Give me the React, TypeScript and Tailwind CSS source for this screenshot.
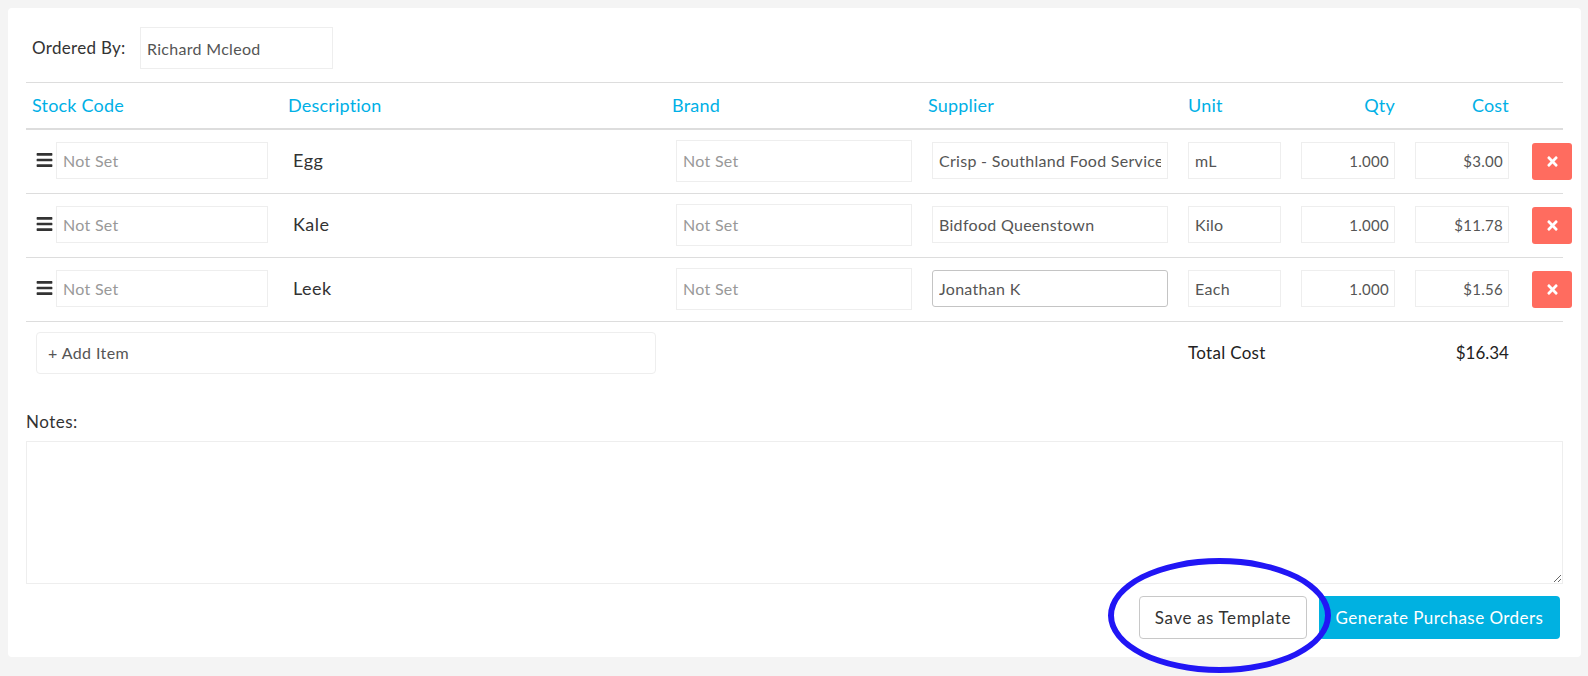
import { FaBars, FaTimes } from "react-icons/fa";

const ROWS = [
  { name: "Egg", supplier: "Crisp - Southland Food Services", unit: "mL", qty: "1.000", cost: "$3.00" },
  { name: "Kale", supplier: "Bidfood Queenstown", unit: "Kilo", qty: "1.000", cost: "$11.78" },
  { name: "Leek", supplier: "Jonathan K", unit: "Each", qty: "1.000", cost: "$1.56", focused: true },
];

const COLS = "grid grid-cols-[256px_384px_256px_260px_106px_114px_114px_46px]";
const FIELD = "border bg-white text-[#555555] outline-none placeholder:text-[#999999]";
const TEXT_FIELD = `${FIELD} h-[37px] px-[6px] text-[16px] tracking-[0.3px]`;
const NUM_FIELD = `${FIELD} border-[#eeeeee] w-[94px] h-[37px] pl-[6px] pr-[5px] text-right text-[15px] tracking-[0.3px]`;

function ItemRow({ row }: { row: (typeof ROWS)[number] }) {
  return (
    <div className={`${COLS} h-[64px] pb-[2px] items-center border-b border-[#dddddd]`}>
      <div className="flex items-center pl-[10px]">
        <FaBars size={18} className="text-[#333333] mr-[3px] w-[17px] mt-[-2px]" />
        <input readOnly placeholder="Not Set" className={`${TEXT_FIELD} border-[#eeeeee] w-[212px]`} />
      </div>
      <div className="pl-[11px] text-[18px] tracking-[0.5px] text-[#333333]">{row.name}</div>
      <div className="pl-[10px]">
        <input readOnly placeholder="Not Set" className={`${FIELD} border-[#eeeeee] w-[236px] h-[42px] px-[6px] text-[16px] tracking-[0.3px]`} />
      </div>
      <div className="pl-[10px]">
        <input
          readOnly
          value={row.supplier}
          className={`${TEXT_FIELD} w-[236px] ${row.focused ? "border-[#c4c4c4] rounded-[3px]" : "border-[#eeeeee]"}`}
        />
      </div>
      <div className="pl-[6px]">
        <input readOnly value={row.unit} className={`${TEXT_FIELD} border-[#eeeeee] w-[93px]`} />
      </div>
      <div className="pl-[13px]">
        <input readOnly value={row.qty} className={NUM_FIELD} />
      </div>
      <div className="pl-[13px]">
        <input readOnly value={row.cost} className={NUM_FIELD} />
      </div>
      <div className="pl-[16px] pt-[2px]">
        <button className="w-[40px] h-[37px] rounded-[3px] bg-[#ff6c5f] text-white flex items-center justify-center">
          <FaTimes size={15} />
        </button>
      </div>
    </div>
  );
}

export default function App() {
  return (
    <div className="relative h-[676px] bg-[#f4f4f4] p-[8px] pr-[7px] font-['Lato',sans-serif] overflow-hidden">
      <div className="bg-white rounded-[4px] h-[649px] pl-[18px] pr-[18px] pt-[19px]">
        <div className="flex items-center h-[42px] pl-[6px] mb-[13px]">
          <span className="text-[17px] tracking-[0.3px] text-[#333333] w-[108px]">Ordered By:</span>
          <input readOnly value="Richard Mcleod" className={`${FIELD} border-[#eeeeee] w-[193px] h-[42px] px-[6px] text-[16px] tracking-[0.3px]`} />
        </div>

        <div className={`${COLS} h-[48px] items-center border-t border-b-2 border-t-[#dddddd] border-b-[#dddddd] text-[18px] tracking-[0.2px] text-[#00b0e6]`}>
          <div className="pl-[6px]">Stock Code</div>
          <div className="pl-[6px]">Description</div>
          <div className="pl-[6px]">Brand</div>
          <div className="pl-[6px]">Supplier</div>
          <div className="pl-[6px]">Unit</div>
          <div className="text-right pr-[7px]">Qty</div>
          <div className="text-right pr-[7px]">Cost</div>
          <div />
        </div>

        {ROWS.map((row) => (
          <ItemRow key={row.name} row={row} />
        ))}

        <div className={`${COLS} items-center mt-[10px]`}>
          <div className="col-span-2 pl-[10px]">
            <div className="w-[620px] h-[42px] border border-[#eeeeee] rounded-[4px] flex items-center pl-[11px] text-[16px] tracking-[0.4px] text-[#555555]">
              + Add Item
            </div>
          </div>
          <div />
          <div />
          <div className="col-span-2 pl-[6px] text-[17px] tracking-[0.3px] text-[#222222]">Total Cost</div>
          <div className="text-right pr-[7px] text-[17px] text-[#222222]">$16.34</div>
          <div />
        </div>

        <div className="mt-[38px] text-[17px] tracking-[0.5px] leading-[20px] text-[#333333]">Notes:</div>
        <textarea readOnly className="block mt-[9px] w-full h-[143px] border border-[#eeeeee] outline-none" />

        <div className="flex justify-end mt-[12px] pr-[3px]">
          <button className="w-[168px] h-[43px] border border-[#c8c8c8] rounded-[4px] bg-white text-[17px] tracking-[0.6px] text-[#333333]">
            Save as Template
          </button>
          <button className="ml-[12px] w-[241px] h-[43px] rounded-[4px] bg-[#00b1e1] text-[17px] tracking-[0.45px] text-white">
            Generate Purchase Orders
          </button>
        </div>
      </div>

      {/* hand-drawn annotation over the screenshot */}
      <div className="absolute left-[1108px] top-[558px] w-[223px] h-[115px] rounded-[50%] border-[6px] border-[#2116f5]" />
    </div>
  );
}
